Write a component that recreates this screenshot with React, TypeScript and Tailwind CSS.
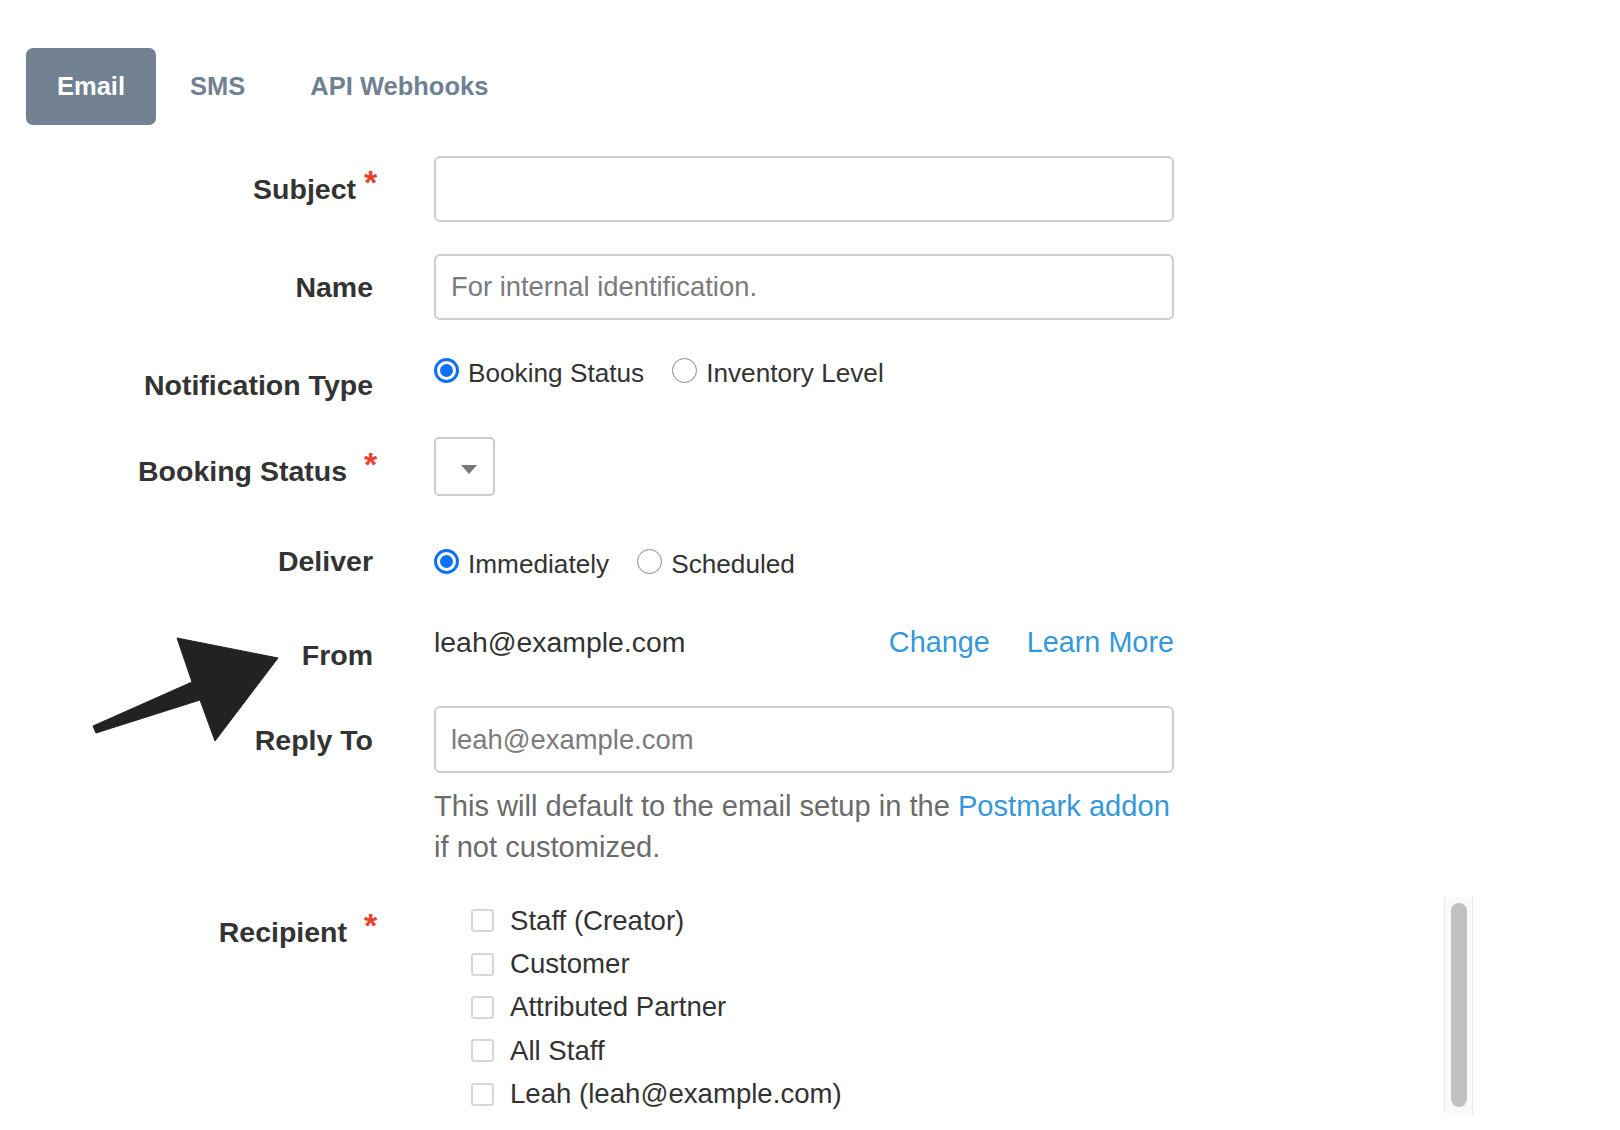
import React from "react";

const LABEL =
  "w-[352px] shrink-0 flex justify-end text-[28.5px] font-bold text-[#333333] leading-[34px]";

function Asterisk({ ml }: { ml: string }) {
  return (
    <span
      className={`${ml} text-[#e8412c] text-[34px] leading-[34px] font-bold -translate-y-[7px] inline-block w-[14px]`}
    >
      *
    </span>
  );
}

function Radio({ checked, label }: { checked: boolean; label: string }) {
  return (
    <div className="flex items-center gap-[9px]">
      {checked ? (
        <div className="w-[25px] h-[25px] rounded-full border-[3px] border-[#0e6ff7] flex items-center justify-center bg-white">
          <div className="w-[13px] h-[13px] rounded-full bg-[#0e6ff7]" />
        </div>
      ) : (
        <div className="w-[25px] h-[25px] rounded-full border-[1.5px] border-[#8a8a8a] bg-white" />
      )}
      <span className="text-[26.2px] text-[#333333] leading-[30px] translate-y-[3px]">{label}</span>
    </div>
  );
}

function Check({ label }: { label: string }) {
  return (
    <div className="h-[43.4px] flex items-center pl-[37px] gap-[16px]">
      <div className="w-[23px] h-[23px] rounded-[3px] border-2 border-[#d6d6de] bg-white" />
      <span className="text-[27.6px] text-[#333333] leading-[34px]">{label}</span>
    </div>
  );
}

export default function App() {
  return (
    <div className="relative min-h-[1130px] h-[1130px] overflow-hidden bg-white pl-[26px] pt-[48px] font-['Liberation_Sans',Arial,sans-serif]">
      {/* Tabs */}
      <div className="flex items-center gap-[3px]">
        <div className="h-[77px] px-[31px] rounded-[7px] bg-[#718191] text-white text-[25.5px] font-bold flex items-center">
          Email
        </div>
        <div className="h-[77px] px-[31px] text-[#718191] text-[25.5px] font-bold flex items-center">
          SMS
        </div>
        <div className="h-[77px] px-[31px] text-[#718191] text-[25.5px] font-bold flex items-center">
          API Webhooks
        </div>
      </div>

      <div className="flex flex-col">
        {/* Subject */}
        <div className="mt-[31px] flex items-center h-[66px]">
          <div className={LABEL}>
            <span>Subject</span>
            <Asterisk ml="ml-[8px]" />
          </div>
          <div className="ml-[56px] w-[740px] h-[66px] border-2 border-[#cdcdcd] rounded-[6px] bg-white" />
        </div>

        {/* Name */}
        <div className="mt-[32px] flex items-center h-[66px]">
          <div className={LABEL}>
            <span className="pr-[5px]">Name</span>
          </div>
          <input
            className="ml-[56px] w-[740px] h-[66px] border-2 border-[#cdcdcd] rounded-[6px] bg-white px-[15px] text-[27.4px] text-[#333] placeholder:text-[#7b7b7b] outline-none"
            placeholder="For internal identification."
          />
        </div>

        {/* Notification type */}
        <div className="mt-[35px] flex items-start">
          <div className={`${LABEL} pt-[13px]`}>
            <span className="pr-[5px]">Notification Type</span>
          </div>
          <div className="ml-[56px] h-[30px] flex items-center gap-[28px]">
            <Radio checked label="Booking Status" />
            <Radio checked={false} label="Inventory Level" />
          </div>
        </div>

        {/* Booking status */}
        <div className="mt-[35px] flex items-start">
          <div className={`${LABEL} pt-[17px]`}>
            <span>Booking Status</span>
            <Asterisk ml="ml-[17px]" />
          </div>
          <div className="ml-[56px] w-[61px] h-[59px] border-2 border-[#cdcdcd] rounded-[5px] bg-white flex items-center justify-center">
            <svg width="16" height="9" viewBox="0 0 16 9" className="ml-[8px] mt-[5px]">
              <polygon points="0,0 16,0 8,9" fill="#777777" />
            </svg>
          </div>
        </div>

        {/* Deliver */}
        <div className="mt-[48px] flex items-center h-[34px]">
          <div className={LABEL}>
            <span className="pr-[5px]">Deliver</span>
          </div>
          <div className="ml-[56px] h-[30px] flex items-center gap-[28px]">
            <Radio checked label="Immediately" />
            <Radio checked={false} label="Scheduled" />
          </div>
        </div>

        {/* From */}
        <div className="mt-[47px] flex items-start">
          <div className={`${LABEL} pt-[13px]`}>
            <span className="pr-[5px]">From</span>
          </div>
          <div className="ml-[56px] w-[740px] flex items-center h-[34px] leading-[34px]">
            <span className="text-[#333333] text-[28.4px]">leah@example.com</span>
            <span className="ml-auto text-[#3498db] text-[28.8px]">Change</span>
            <span className="ml-[37px] text-[#3498db] text-[28.8px]">Learn More</span>
          </div>
        </div>

        {/* Reply to */}
        <div className="mt-[34px] flex items-center h-[67px]">
          <div className={LABEL}>
            <span className="pr-[5px]">Reply To</span>
          </div>
          <input
            className="ml-[56px] w-[740px] h-[67px] border-2 border-[#cdcdcd] rounded-[6px] bg-white px-[15px] text-[27.4px] text-[#333] placeholder:text-[#7b7b7b] outline-none"
            placeholder="leah@example.com"
          />
        </div>

        <div className="ml-[408px] mt-[12.5px] text-[29.1px] leading-[41px] text-[#6b6b6b] whitespace-nowrap">
          This will default to the email setup in the <span className="text-[#3498db]">Postmark addon</span>
          <br />
          if not customized.
        </div>

        {/* Recipient */}
        <div className="mt-[29.5px] flex items-start">
          <div className={`${LABEL} pt-[18px]`}>
            <span>Recipient</span>
            <Asterisk ml="ml-[17px]" />
          </div>
          <div className="ml-[56px] w-[1039px] flex items-start">
            <div className="flex-1 flex flex-col pt-[2px]">
              <Check label="Staff (Creator)" />
              <Check label="Customer" />
              <Check label="Attributed Partner" />
              <Check label="All Staff" />
              <Check label="Leah (leah@example.com)" />
            </div>
            <div className="w-[29px] h-[217px] border-x border-[#e6e6e6] bg-[#fafafa] pt-[6px] flex justify-center">
              <div className="w-[16px] h-[204px] rounded-full bg-[#c1c1c1]" />
            </div>
          </div>
        </div>
      </div>

      {/* Annotation arrow */}
      <svg
        className="absolute left-[90px] top-[635px]"
        width="192"
        height="110"
        viewBox="0 0 192 110"
      >
        <polygon
          points="3,91 102,47 87,3 188,23 125,106 110,65 6,98"
          fill="#222222"
          stroke="#222222"
          strokeWidth="1"
          strokeLinejoin="round"
        />
      </svg>
    </div>
  );
}
